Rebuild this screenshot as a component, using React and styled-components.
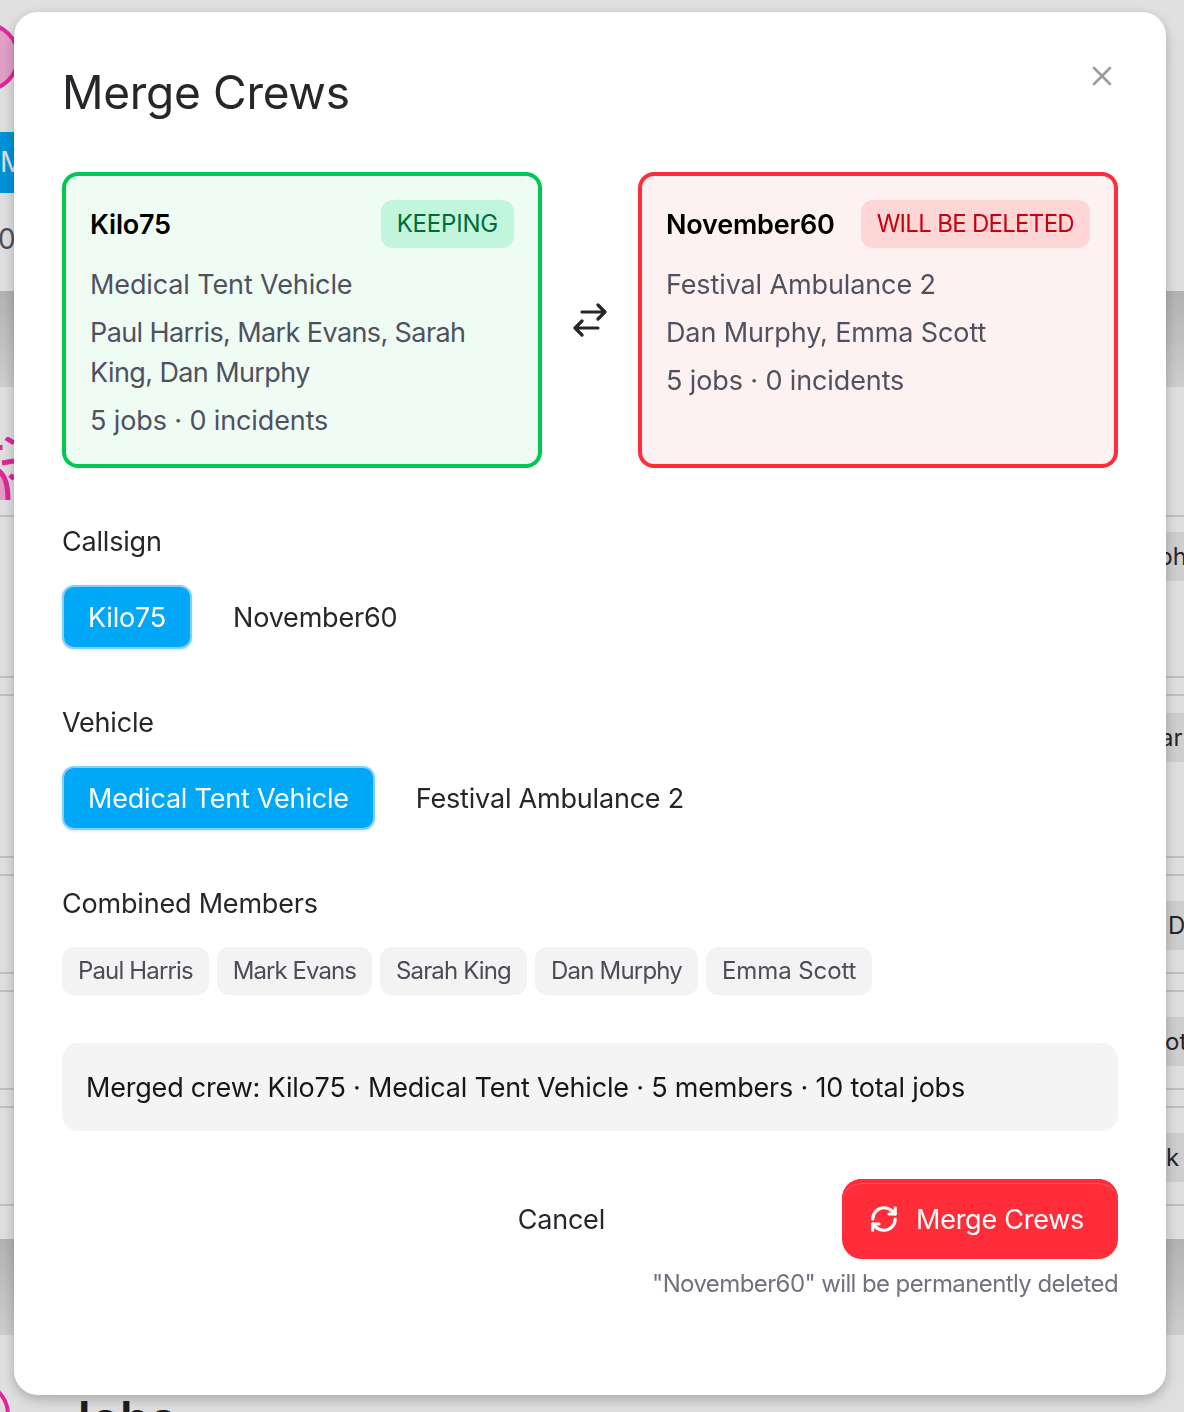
import styled, { createGlobalStyle } from "styled-components";
import { X, RefreshCw } from "lucide-react";

const Estilo = createGlobalStyle`
    * { box-sizing: border-box; }
    html, body { margin: 0; padding: 0; }
    body {
        font-family: "Inter", "Noto Sans", sans-serif;
        background: #ffffff;
        overflow: hidden;
    }
`

/* page behind the dialog */
const Pagina = styled.div`
    width: 1184px;
    height: 1412px;
    overflow: hidden;
    color: #2a2a30;
`
const Topo = styled.div`
    height: 291px;
    display: flex;
    flex-direction: column;
    align-items: flex-start;
    padding-top: 22px;
`
const Avatar = styled.div`
    width: 70px;
    height: 70px;
    margin-left: ${p => p.$recuo}px;
    border-radius: 50%;
    border: 4px solid #ff2dae;
    background: ${p => p.$vazio ? "transparent" : "#ffb6e3"};
    flex: none;
`
const BotaoFundo = styled.div`
    margin-top: 40px;
    width: 60px;
    height: 61px;
    background: #00a8f7;
    color: #fff;
    font-size: 28px;
    line-height: 61px;
`
const ContaFundo = styled.div`
    margin: 30px 0 0 -2px;
    font-size: 28px;
    line-height: 32px;
    color: #5a5a66;
`
const Faixa = styled.div`
    height: 96px;
    background: linear-gradient(#cccccc, #ececec);
`
const Tabela = styled.div`
    height: 852px;
    display: flex;
    flex-direction: column;
`
const PrimeiraLinha = styled.div`
    height: 130px;
    border-bottom: 2px solid #dcdcdc;
    display: flex;
    align-items: flex-start;
    padding-top: 50px;
`
const IconeRosa = styled.svg`
    margin-left: -24px;
    flex: none;
`
const Linha = styled.div`
    height: ${p => p.$altura}px;
    border-bottom: 2px solid #dcdcdc;
    display: flex;
    justify-content: flex-end;
    align-items: flex-start;
    padding-top: ${p => p.$topo}px;
`
const Etiqueta = styled.span`
    width: 60px;
    height: 49px;
    padding-left: ${p => p.$recuo}px;
    background: #ececec;
    border-radius: 8px 0 0 8px;
    font-size: 24px;
    line-height: 49px;
    white-space: nowrap;
    overflow: hidden;
    flex: none;
`
const SecaoJobs = styled.div`
    display: flex;
    align-items: flex-start;
    padding-top: 45px;
`
const TituloFundo = styled.h2`
    margin: 5px 0 0 53px;
    font-size: 48px;
    font-weight: 600;
    line-height: 68px;
    color: #222;
`

/* backdrop and dialog */
const Fundo = styled.div`
    position: fixed;
    inset: 0;
    background: rgba(0, 0, 0, .12);
`
const Dialogo = styled.section`
    position: fixed;
    left: 14px;
    top: 12px;
    width: 1152px;
    height: 1383px;
    padding: 48px;
    background: #fff;
    border-radius: 24px;
    box-shadow: 0 4px 12px rgba(0, 0, 0, .22), 0 10px 40px rgba(0, 0, 0, .05);
`
const Cabecalho = styled.header`
    height: 112px;
    display: flex;
    justify-content: space-between;
    align-items: flex-start;
`
const Titulo = styled.h1`
    margin: -1px 0 0;
    font-size: 46px;
    line-height: 66px;
    font-weight: 400;
    letter-spacing: -.3px;
    color: #26262b;
`
const Fechar = styled.button`
    width: 32px;
    height: 32px;
    padding: 0;
    border: 0;
    background: none;
    color: #9b9ba6;
    display: flex;
    align-items: center;
    justify-content: center;
`
const Comparacao = styled.div`
    display: grid;
    grid-template-columns: 480px 96px 480px;
    grid-template-rows: 296px;
`
const Cartao = styled.article`
    padding: 24px 24px 23px;
    border: 4px solid ${p => p.$perigo ? "#ff2d3a" : "#00c853"};
    border-radius: 16px;
    background: ${p => p.$perigo ? "#fef1f2" : "#effcf4"};
`
const TopoCartao = styled.div`
    display: flex;
    justify-content: space-between;
    align-items: center;
    margin-bottom: 17px;
`
const Nome = styled.strong`
    font-size: 27px;
    font-weight: 600;
    letter-spacing: -.2px;
    color: #000;
`
const Selo = styled.span`
    height: 48px;
    padding: 0 16px;
    border-radius: 12px;
    background: ${p => p.$perigo ? "#ffd6d6" : "#c1f6dc"};
    color: ${p => p.$perigo ? "#c8000f" : "#006b36"};
    font-size: 24px;
    line-height: 48px;
    letter-spacing: ${p => p.$perigo ? "-.7px" : "-.2px"};
    white-space: nowrap;
`
const Detalhe = styled.p`
    margin: 0 0 8px;
    font-size: 27px;
    line-height: 40px;
    letter-spacing: ${p => p.$justo ? "-.6px" : "-.12px"};
    color: #50515f;

    &:last-child {
        margin-bottom: 0;
    }
`
const Troca = styled.div`
    display: flex;
    align-items: center;
    justify-content: center;
    color: #26262b;
`
const Grupo = styled.div`
    margin-top: 54px;
`
const Rotulo = styled.div`
    font-size: 27px;
    line-height: 40px;
    letter-spacing: -.2px;
    color: #26262b;
    margin-bottom: 23px;
`
const Opcoes = styled.div`
    display: flex;
    gap: 15px;
`
const Opcao = styled.button`
    height: 64px;
    padding: 0 24px;
    border: 2px solid ${p => p.$ativo ? "#80cfff" : "transparent"};
    border-radius: 12px;
    background: ${p => p.$ativo ? "#00a8f7" : "transparent"};
    color: ${p => p.$ativo ? "#fff" : "#26262b"};
    font: inherit;
    font-size: 27px;
    letter-spacing: -.2px;
    box-shadow: ${p => p.$ativo ? "0 1px 3px rgba(0, 0, 0, .12)" : "none"};
`
const Chips = styled.div`
    display: flex;
    gap: 8px;
`
const Chip = styled.span`
    height: 48px;
    padding: 0 16px;
    border-radius: 12px;
    background: #f3f3f4;
    color: #4c4c58;
    font-size: 24px;
    line-height: 48px;
    letter-spacing: ${p => p.$espaco}px;
    white-space: nowrap;
`
const Resumo = styled.div`
    margin-top: 48px;
    height: 88px;
    padding: 0 24px;
    border-radius: 16px;
    background: #f4f4f5;
    font-size: 27px;
    line-height: 90px;
    letter-spacing: -.2px;
    color: #17171b;
`
const Rodape = styled.footer`
    margin-top: 48px;
    display: flex;
    flex-direction: column;
    align-items: flex-end;
`
const Acoes = styled.div`
    display: flex;
    align-items: center;
    gap: 213px;
`
const Cancelar = styled.button`
    height: 80px;
    padding: 0 24px;
    border: 0;
    background: none;
    font: inherit;
    font-size: 27px;
    letter-spacing: -.2px;
    color: #26262b;
`
const Confirmar = styled.button`
    width: 276px;
    height: 80px;
    padding: 0 0 0 27px;
    border: 0;
    border-radius: 20px;
    background: #ff2d3a;
    box-shadow: inset 0 4px 0 #ff2d3a, inset 0 5px 0 #ff5660;
    color: #fff;
    font: inherit;
    font-size: 27px;
    letter-spacing: -.25px;
    display: flex;
    align-items: center;
    gap: 17px;
`
const Aviso = styled.p`
    margin: 9px 0 0;
    font-size: 24px;
    line-height: 32px;
    letter-spacing: -.6px;
    color: #71717f;
`

const IconeTroca = () => (
    <svg width="34" height="34" viewBox="0 0 34 34" fill="none" stroke="currentColor" strokeWidth="3.2" strokeLinecap="round" strokeLinejoin="round">
        <path d="M9 9h23M25 2l7 7-7 7" />
        <path d="M25 25H2M9 18l-7 7 7 7" />
    </svg>
)

const membros = [
    { nome: "Paul Harris", espaco: -.85 },
    { nome: "Mark Evans", espaco: -.95 },
    { nome: "Sarah King", espaco: -.85 },
    { nome: "Dan Murphy", espaco: -.8 },
    { nome: "Emma Scott", espaco: -.1 },
];

const App = () => {
    return (
        <>
            <Estilo />
            <Pagina>
                <Topo>
                    <Avatar $recuo={-50} />
                    <BotaoFundo>M</BotaoFundo>
                    <ContaFundo>0</ContaFundo>
                </Topo>
                <Faixa />
                <Tabela>
                    <PrimeiraLinha>
                        <IconeRosa width="60" height="64" viewBox="0 0 60 64" fill="none" stroke="#ff2dae" strokeWidth="5">
                            <path d="M30 1l8 5M26 26l12-2M34 38l4 4M24 8v5" />
                            <path d="M18 32C28 34 32 45 32 63H18Z" fill="#ffb6e3" stroke="none" />
                            <path d="M18 32C28 34 32 45 32 63" />
                        </IconeRosa>
                    </PrimeiraLinha>
                    <Linha $altura={161} $topo={15}><Etiqueta $recuo={34}>ph</Etiqueta></Linha>
                    <Linha $altura={18} $topo={0} />
                    <Linha $altura={162} $topo={17}><Etiqueta $recuo={36}>ar</Etiqueta></Linha>
                    <Linha $altura={18} $topo={0} />
                    <Linha $altura={98} $topo={25}><Etiqueta $recuo={44}>D</Etiqueta></Linha>
                    <Linha $altura={18} $topo={0} />
                    <Linha $altura={98} $topo={25}><Etiqueta $recuo={41}>ot</Etiqueta></Linha>
                    <Linha $altura={18} $topo={0} />
                    <Linha $altura={98} $topo={25}><Etiqueta $recuo={42}>k</Etiqueta></Linha>
                </Tabela>
                <Faixa />
                <SecaoJobs>
                    <Avatar $recuo={-60} $vazio />
                    <TituloFundo>Jobs</TituloFundo>
                </SecaoJobs>
            </Pagina>
            <Fundo />
            <Dialogo>
                <Cabecalho>
                    <Titulo>Merge Crews</Titulo>
                    <Fechar><X size={32} strokeWidth={2} /></Fechar>
                </Cabecalho>
                <Comparacao>
                    <Cartao>
                        <TopoCartao>
                            <Nome>Kilo75</Nome>
                            <Selo>KEEPING</Selo>
                        </TopoCartao>
                        <Detalhe>Medical Tent Vehicle</Detalhe>
                        <Detalhe $justo>Paul Harris, Mark Evans, Sarah King, Dan Murphy</Detalhe>
                        <Detalhe>5 jobs · 0 incidents</Detalhe>
                    </Cartao>
                    <Troca><IconeTroca /></Troca>
                    <Cartao $perigo>
                        <TopoCartao>
                            <Nome>November60</Nome>
                            <Selo $perigo>WILL BE DELETED</Selo>
                        </TopoCartao>
                        <Detalhe>Festival Ambulance 2</Detalhe>
                        <Detalhe>Dan Murphy, Emma Scott</Detalhe>
                        <Detalhe>5 jobs · 0 incidents</Detalhe>
                    </Cartao>
                </Comparacao>
                <Grupo>
                    <Rotulo>Callsign</Rotulo>
                    <Opcoes>
                        <Opcao $ativo>Kilo75</Opcao>
                        <Opcao>November60</Opcao>
                    </Opcoes>
                </Grupo>
                <Grupo>
                    <Rotulo>Vehicle</Rotulo>
                    <Opcoes>
                        <Opcao $ativo>Medical Tent Vehicle</Opcao>
                        <Opcao>Festival Ambulance 2</Opcao>
                    </Opcoes>
                </Grupo>
                <Grupo>
                    <Rotulo>Combined Members</Rotulo>
                    <Chips>
                        {membros.map(membro => <Chip key={membro.nome} $espaco={membro.espaco}>{membro.nome}</Chip>)}
                    </Chips>
                </Grupo>
                <Resumo>Merged crew: Kilo75 · Medical Tent Vehicle · 5 members · 10 total jobs</Resumo>
                <Rodape>
                    <Acoes>
                        <Cancelar>Cancel</Cancelar>
                        <Confirmar><RefreshCw size={30} strokeWidth={2.5} />Merge Crews</Confirmar>
                    </Acoes>
                    <Aviso>"November60" will be permanently deleted</Aviso>
                </Rodape>
            </Dialogo>
        </>
    )
}

export default App;
